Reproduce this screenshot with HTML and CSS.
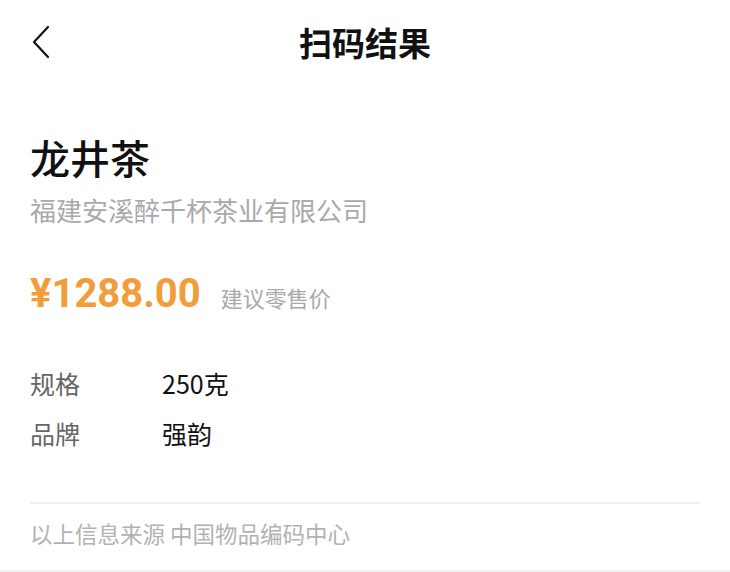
FILE: index.html
```html
<!DOCTYPE html>
<html lang="zh-CN">
<head>
    <meta charset="UTF-8">
    <meta name="viewport" content="width=device-width, initial-scale=1.0">
    <title>扫码结果</title>
    <link rel="stylesheet" href="styles.css">
</head>
<body>
    <div class="page">
        <div class="nav">
            <div class="back">
                <svg width="20" height="34" viewBox="0 0 20 34">
                    <polyline points="16,2 2,17 16,32" fill="none" stroke="#111" stroke-width="2.2" stroke-linecap="round" stroke-linejoin="round"/>
                </svg>
            </div>
            <h1 class="title">扫码结果</h1>
            <div></div>
        </div>

        <div class="content">
            <h2 class="name">龙井茶</h2>
            <div class="company">福建安溪醉千杯茶业有限公司</div>

            <div class="price-row">
                <span class="price">¥1288.00</span>
                <span class="price-note">建议零售价</span>
            </div>

            <div class="info">
                <div class="info-row">
                    <span class="label">规格</span>
                    <span class="value">250克</span>
                </div>
                <div class="info-row">
                    <span class="label">品牌</span>
                    <span class="value">强韵</span>
                </div>
            </div>

            <div class="divider"></div>

            <div class="source">以上信息来源 中国物品编码中心</div>
        </div>
    </div>
</body>
</html>
```

FILE: styles.css
```css
* {
    box-sizing: border-box;
    margin: 0;
    padding: 0;
}
body {
    background: #f2f2f2;
    font-family: "Noto Sans CJK SC", "Noto Sans", sans-serif;
    color: #111;
}
.page {
    background: #fff;
    height: 570px;
}
.nav {
    display: grid;
    grid-template-columns: 1fr auto 1fr;
    align-items: center;
    height: 84px;
    padding: 0 30px;
}
.back {
    display: flex;
    align-items: center;
    padding-left: 2px;
}
.back svg {
    display: block;
}
.title {
    font-size: 33px;
    font-weight: 700;
    line-height: 44px;
    color: #111;
}
.content {
    padding: 0 30px;
}
.name {
    margin-top: 49px;
    font-size: 40px;
    font-weight: 500;
    line-height: 48px;
    color: #111;
}
.company {
    margin-top: 11px;
    font-size: 26px;
    line-height: 36px;
    color: #a9a9a9;
}
.price-row {
    display: flex;
    align-items: baseline;
    gap: 20px;
    margin-top: 42px;
    height: 48px;
}
.price {
    font-family: Roboto, "Noto Sans", sans-serif;
    font-size: 40px;
    font-weight: 700;
    line-height: 48px;
    color: #f29c3a;
}
.price-note {
    font-size: 22px;
    color: #a9a9a9;
}
.info {
    margin-top: 40px;
}
.info-row {
    display: flex;
    align-items: center;
    height: 50px;
    font-size: 25px;
}
.label {
    width: 132px;
    color: #666;
}
.value {
    color: #111;
}
.divider {
    margin-top: 44px;
    height: 2px;
    background: #efefef;
}
.source {
    margin-top: 14px;
    font-size: 22.5px;
    line-height: 30px;
    color: #b2b2b2;
}
```
